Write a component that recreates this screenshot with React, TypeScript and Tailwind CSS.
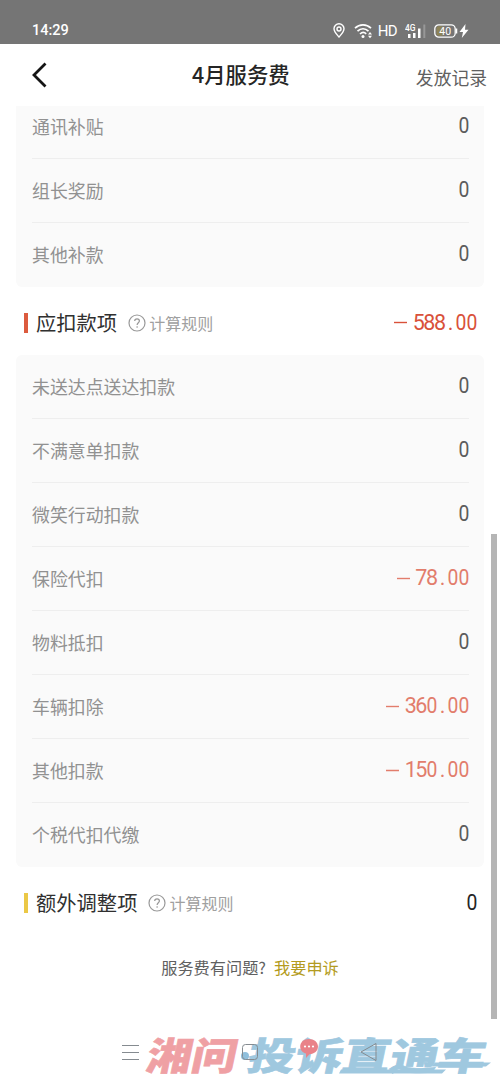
import React from 'react';
import clsx from 'clsx';

type Item = {
  label: string;
  value: string;
};

type SectionHeaderProps = {
  title: string;
  value: string;
  barClass: string;
  valueClass: string;
};

const SUBSIDIES: Item[] = [
  { label: '通讯补贴', value: '0' },
  { label: '组长奖励', value: '0' },
  { label: '其他补款', value: '0' },
];

const DEDUCTIONS: Item[] = [
  { label: '未送达点送达扣款', value: '0' },
  { label: '不满意单扣款', value: '0' },
  { label: '微笑行动扣款', value: '0' },
  { label: '保险代扣', value: '-78.00' },
  { label: '物料抵扣', value: '0' },
  { label: '车辆扣除', value: '-360.00' },
  { label: '其他扣款', value: '-150.00' },
  { label: '个税代扣代缴', value: '0' },
];

// Every digit and the decimal point take a cell of the same width
const Amount: React.FC<{ value: string; className?: string }> = ({ value, className }) => {
  const negative = value.startsWith('-');
  const digits = negative ? value.slice(1) : value;

  return (
    <span className={clsx("mb-px flex items-center font-['Roboto',sans-serif] text-[21.500px] leading-6", className)}>
      {negative && (
        <svg className="mr-[6px]" width="13" height="3" viewBox="0 0 13 3" stroke="currentColor" strokeWidth="1.4">
          <path d="M0 1.500h13" />
        </svg>
      )}
      {digits.split('').map((char, i) => (
        <span key={i} className="flex w-[10.6px] justify-center">
          <span className={char === '0' ? 'scale-x-[.9]' : undefined}>{char}</span>
        </span>
      ))}
    </span>
  );
};

const StatusBar = () => (
  <div className="flex h-11 shrink-0 items-center bg-[#757575] pt-4 pr-[31px] pl-8 text-white">
    <span className="mt-px font-['Roboto',sans-serif] text-[14.500px] leading-4 font-medium">14:29</span>
    <div className="mt-px ml-auto flex items-center">
      <svg width="12" height="15" viewBox="0 0 12 15" fill="none" stroke="currentColor" strokeWidth="1.4">
        <path d="M6 14C3.5 11.2 1 8.8 1 5.8a5 5 0 0 1 10 0C11 8.8 8.5 11.2 6 14Z" />
        <circle cx="6" cy="6" r="2" />
      </svg>
      <svg className="ml-[9px]" width="20" height="16" viewBox="0 0 20 16" fill="none" stroke="currentColor" strokeWidth="1.7">
        <path d="M1 5.2C5.5.8 12.5.8 17 5.2M3.5 8.2c3.300-3.100 7.700-3.100 11 0M6 11c1.900-1.800 4.500-1.800 6.200-.2" />
        <circle cx="9" cy="13.4" r="1.5" fill="currentColor" stroke="none" />
        <path d="m14 11.500 2-2.500 2 2.500ZM14 12.800l2 2.500 2-2.500Z" fill="currentColor" stroke="none" />
      </svg>
      <span className="ml-1 font-['Roboto',sans-serif] text-[15px] leading-4 tracking-[-.6px]">HD</span>
      <svg className="ml-2" width="21" height="16" viewBox="0 0 21 16" fill="currentColor">
        <text x="0" y="7.5" fontSize="9" fontFamily="Roboto, sans-serif" fontWeight="500" textLength="10.5" lengthAdjust="spacingAndGlyphs">4G</text>
        <path d="M3 11h2.500v4H3zM8 10h2.500v5H8zM13 5.500h2.500V15H13z" />
        <path d="M18.300 1.500h2V15h-2z" opacity=".25" />
      </svg>
      <svg className="ml-2" width="35" height="14" viewBox="0 0 35 14">
        <rect x=".8" y=".8" width="20.4" height="12.4" rx="4" fill="#757575" stroke="#fff" strokeWidth="1.3" />
        <path d="M4.500 2.300H9v9.400H4.500a2 2 0 0 1-2-2V4.300a2 2 0 0 1 2-2Z" fill="#8d8358" />
        <path d="M22.500 4.500v5" stroke="#fff" strokeWidth="1.5" />
        <text x="11.2" y="10.8" fontSize="10.5" textAnchor="middle" fill="#fff" fontFamily="Roboto, sans-serif">40</text>
        <path d="M31.500 0 25.500 8h3.500l-1.200 6L34.500 5.800H31Z" fill="#fff" />
      </svg>
    </div>
  </div>
);

const NavBar = () => (
  <header className="z-10 flex h-[62px] shrink-0 items-center bg-white pr-[13px] pl-8">
    <svg width="16" height="26" viewBox="0 0 16 26" fill="none" stroke="#151515" strokeWidth="2.8">
      <path d="M13.500 1.500 2 13l11.500 11.500" />
    </svg>
    <h1 className="mb-[2px] ml-36 text-[21.400px] leading-none font-medium text-[#252525]">4月服务费</h1>
    <span className="mt-[6px] ml-auto text-[17.800px] leading-none text-[#606060]">发放记录</span>
  </header>
);

const ItemCard: React.FC<{ items: Item[]; className?: string }> = ({ items, className }) => (
  <div className={clsx('mx-4 overflow-hidden rounded-md bg-[#fafafa] pr-[15px] pl-4', className)}>
    {items.map((item) => (
      <div
        key={item.label}
        className="flex h-16 items-center justify-between border-b border-[#eee] last:border-transparent"
      >
        <span className="text-[17.900px] leading-none text-[#919191]">{item.label}</span>
        <Amount value={item.value} className={item.value.startsWith('-') ? 'text-[#e27d6c]' : 'text-[#5c5c5c]'} />
      </div>
    ))}
  </div>
);

const SectionHeader: React.FC<SectionHeaderProps> = ({ title, value, barClass, valueClass }) => (
  <div className="flex h-[68px] shrink-0 items-center pt-1 pr-[23px] pl-6">
    <span className={clsx('h-5 w-1', barClass)} />
    <h2 className="mb-px ml-2 text-[20.300px] leading-none text-[#303030]">{title}</h2>
    <div className="ml-[11px] flex items-center gap-[3px] text-[#999]">
      <svg width="18" height="18" viewBox="0 0 18 18" fill="none" stroke="currentColor" strokeWidth="1.2">
        <circle cx="9" cy="9" r="8" />
        <path d="M6.700 7.100c0-3 4.700-2.900 4.700-.1 0 1.700-2.300 1.800-2.300 3.900M9.100 12.300v1.400" />
      </svg>
      <span className="mb-px text-base leading-none text-[#a0a0a0]">计算规则</span>
    </div>
    <Amount value={value} className={clsx('ml-auto', valueClass)} />
  </div>
);

const Watermark = () => (
  <svg
    className="absolute inset-0"
    width="500"
    height="67"
    viewBox="0 0 500 67"
    fontFamily="'Noto Sans CJK SC', sans-serif"
    fontWeight="900"
    fontSize="38"
    strokeWidth=".6"
  >
    <g transform="skewX(-12)">
      <text x="156" y="54.5" fill="#efa0a4" stroke="#efa0a4" textLength="90" lengthAdjust="spacingAndGlyphs">湘问</text>
      <text x="257" y="54.5" fill="#9fc8df" stroke="#9fc8df" textLength="238" lengthAdjust="spacingAndGlyphs">投诉直通车</text>
    </g>
    <path d="M341 53.500h105l-4 4H339ZM435 46.500h56l-5 4h-54Z" fill="#9fc8df" />
    <circle cx="245" cy="40" r="4" fill="#8fbfdc" />
    <path d="M309 23c5 0 9 3 9 7.500 0 4.500-3.500 7.500-8.500 7.700L306 42v-4.400c-3.300-1-5.800-3.300-5.800-7.100 0-4.500 3.800-7.500 8.800-7.500Z" fill="#e98289" />
    <g fill="#fff">
      <circle cx="305" cy="30.5" r="1.1" />
      <circle cx="309" cy="30.5" r="1.1" />
      <circle cx="313" cy="30.5" r="1.1" />
    </g>
  </svg>
);

const SystemNav = () => (
  <div className="relative mt-auto h-[67px] shrink-0">
    <Watermark />
    <svg className="relative" width="500" height="67" viewBox="0 0 500 67" fill="none" stroke="#858b90" strokeWidth="1">
      <path d="M122 29.500h17M122 36.500h17M122 43.500h17" />
      <rect x="242.5" y="28.5" width="15" height="15" rx="3" />
      <path d="M376 27.500v17L361 36Z" strokeLinejoin="round" />
    </svg>
  </div>
);

export default function App() {
  return (
    <div className="relative flex h-[1083px] w-[500px] flex-col overflow-hidden bg-white font-['Noto_Sans_CJK_SC',sans-serif]">
      <StatusBar />
      <NavBar />
      {/* First card is scrolled partly under the nav bar */}
      <ItemCard items={SUBSIDIES} className="-mt-[11px] shrink-0" />
      <SectionHeader title="应扣款项" value="-588.00" barClass="bg-[#dc5b3e]" valueClass="text-[#d9513a]" />
      <ItemCard items={DEDUCTIONS} className="shrink-0" />
      <SectionHeader title="额外调整项" value="0" barClass="bg-[#ebc846]" valueClass="text-[#252525]" />
      <p className="mt-6 flex justify-center gap-2 text-[16.200px] leading-none text-[#606060]">
        <span>服务费有问题?</span>
        <a className="text-[#b39b20]">我要申诉</a>
      </p>
      <SystemNav />
      {/* Scroll indicator */}
      <div className="absolute top-[534px] right-[3px] h-[485px] w-[6px] bg-[#b5b5b5]" />
    </div>
  );
}
